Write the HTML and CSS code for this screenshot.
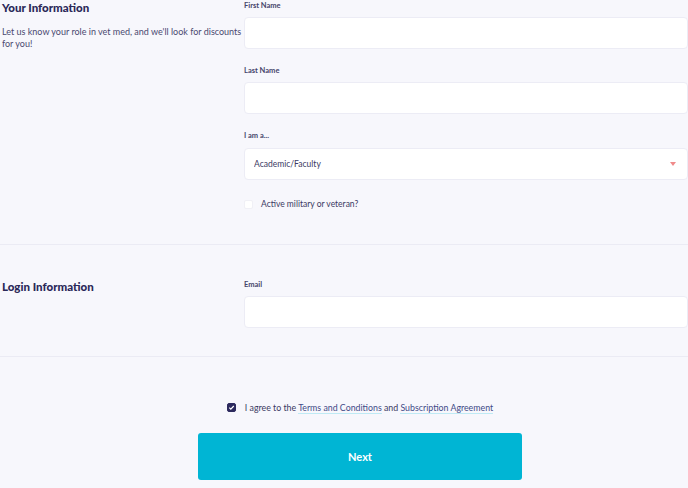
FILE: index.html
```html
<!DOCTYPE html>
<html lang="en">
<head>
    <meta charset="UTF-8">
    <meta name="viewport" content="width=device-width, initial-scale=1.0">
    <title>Create Account</title>
    <link rel="stylesheet" href="styles.css">
</head>
<body>
    <div class="page">
        <form id="signupForm">
            <section class="form-section first">
                <div class="section-intro">
                    <h2>Your Information</h2>
                    <p>Let us know your role in vet med, and we'll look for discounts for you!</p>
                </div>
                <div class="section-fields">
                    <div class="form-group">
                        <label for="firstName">First Name</label>
                        <input type="text" id="firstName" name="firstName">
                    </div>
                    <div class="form-group">
                        <label for="lastName">Last Name</label>
                        <input type="text" id="lastName" name="lastName">
                    </div>
                    <div class="form-group">
                        <label for="role">I am a...</label>
                        <div class="select-wrap">
                            <select id="role" name="role">
                                <option>Academic/Faculty</option>
                                <option>Student</option>
                                <option>Veterinarian</option>
                            </select>
                            <svg class="caret" width="6" height="4" viewBox="0 0 6 4"><path d="M0 0h6L3 4z" fill="#f08a8a"/></svg>
                        </div>
                    </div>
                    <label class="check-row">
                        <input type="checkbox" name="military">
                        <span class="box"></span>
                        <span>Active military or veteran?</span>
                    </label>
                </div>
            </section>

            <section class="form-section login">
                <div class="section-intro">
                    <h2>Login Information</h2>
                </div>
                <div class="section-fields">
                    <div class="form-group last">
                        <label for="email">Email</label>
                        <input type="email" id="email" name="email">
                    </div>
                </div>
            </section>

            <div class="form-footer">
                <label class="check-row agree">
                    <input type="checkbox" name="agree" checked>
                    <span class="box"></span>
                    <span>I agree to the <a href="#">Terms and Conditions</a> and <a href="#">Subscription Agreement</a></span>
                </label>
                <button type="submit" class="btn-next">Next</button>
            </div>
        </form>
    </div>
</body>
</html>
```

FILE: styles.css
```css
body {
    margin: 0;
    background-color: #f7f7fc;
    font-family: Lato, "Open Sans", sans-serif;
    color: #3b3a63;
    overflow: hidden;
}

.page {
    width: 720px;
}

.form-section {
    display: grid;
    grid-template-columns: 244px 444px;
    border-bottom: 1px solid #ebebf4;
}

.form-section.first {
    padding-bottom: 35px;
}

.form-section.login {
    padding-top: 34px;
    padding-bottom: 28px;
}

.section-intro {
    padding-left: 2px;
}

.section-intro h2 {
    margin: 0;
    font-size: 11.5px;
    font-weight: 900;
    color: #2a2858;
    line-height: 16px;
}

.section-intro p {
    margin: 10px 0 0;
    font-size: 9px;
    line-height: 12px;
    color: #4a4970;
}

.form-group {
    margin-bottom: 16px;
}

.form-group.last {
    margin-bottom: 0;
}

.form-group label {
    display: block;
    font-size: 7.5px;
    font-weight: 700;
    color: #45446a;
    line-height: 12px;
    margin-bottom: 5px;
}

input[type="text"],
input[type="email"],
select {
    display: block;
    width: 100%;
    height: 32px;
    box-sizing: border-box;
    background: #fff;
    border: 1px solid #ececf5;
    border-radius: 4px;
    font-family: inherit;
    font-size: 8.5px;
    color: #3b3a63;
    padding: 0 9px;
    outline: none;
}

.select-wrap {
    position: relative;
    top: 1px;
}

select {
    appearance: none;
    -webkit-appearance: none;
}

.caret {
    position: absolute;
    right: 12px;
    top: 14px;
}

.check-row {
    display: flex;
    align-items: center;
    font-size: 8.5px;
    color: #3b3a63;
    padding-top: 4px;
}

.check-row input {
    display: none;
}

.box {
    width: 9px;
    height: 9px;
    background: #fff;
    border: 1px solid #f0f0f6;
    border-radius: 2px;
    margin-right: 8px;
    box-sizing: border-box;
    flex-shrink: 0;
}

.check-row input:checked + .box {
    background: #2d2a5e url("data:image/svg+xml,%3Csvg xmlns='http://www.w3.org/2000/svg' viewBox='0 0 9 9'%3E%3Cpath d='M2.3 4.6l1.5 1.5 3-3.1' fill='none' stroke='white' stroke-width='1.2'/%3E%3C/svg%3E") center/9px 9px no-repeat;
    border-color: #2d2a5e;
}

.form-footer {
    display: flex;
    flex-direction: column;
    align-items: center;
    padding-top: 45px;
}

.agree {
    padding-top: 0;
    font-size: 8.8px;
}

.agree .box {
    margin-right: 9px;
}

.agree a {
    color: #3f4a87;
    text-decoration: none;
    border-bottom: 1px solid #bfeaf4;
}

.btn-next {
    margin-top: 20px;
    width: 324px;
    height: 47px;
    border: none;
    border-radius: 3px;
    background-color: #00b5d4;
    color: #fff;
    font-family: inherit;
    font-size: 11px;
    font-weight: 700;
    cursor: pointer;
}
```
